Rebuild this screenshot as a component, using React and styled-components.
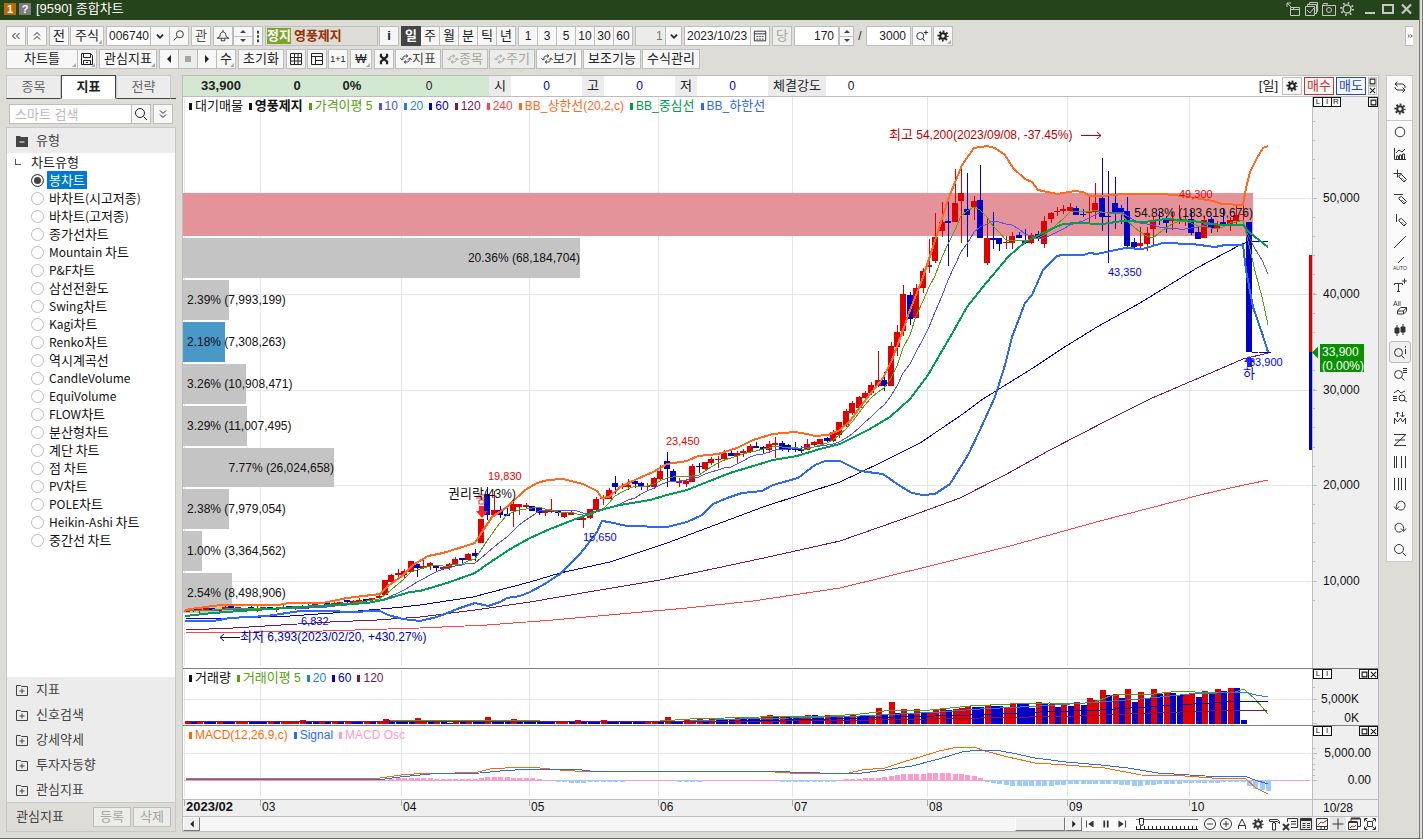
import React from "react"
import styled, { createGlobalStyle, css } from "styled-components"

const GlobalStyle = createGlobalStyle`
  * {
    box-sizing: border-box;
  }

  body {
    margin: 0;
    background: #dddcd6;
    color: #222;
    font-family: "Liberation Sans", "Noto Sans CJK KR", sans-serif;
    font-size: 12px;
    line-height: 16px;
  }

  button, input, select {
    font: inherit;
    color: inherit;
  }
`

/* ---------- icons ---------- */

const Gear = () => (
  <>
    <circle cx="8" cy="8" r="3.2" strokeWidth="2.4" />
    <circle cx="8" cy="8" r="5.2" strokeWidth="2.4" strokeDasharray="2.04 2.04" strokeDashoffset="1" />
  </>
)

const Lens = () => (
  <>
    <circle cx="6.5" cy="8.5" r="4" />
    <path d="M9.5 11.5l3 3" />
  </>
)

const Pen = () => <path d="M7 7.5l2.5-1 5 5-2.5 2.5-5-5zM9.5 10l1 1M11.500 11.500l1 1" />

const icons = {
  gear: <Gear />,
  search: <><circle cx="7" cy="7" r="4.5" /><path d="M10.5 10.5l3.5 3.5" /></>,
  searchLeft: <><circle cx="9" cy="6" r="4" /><path d="M6 9l-4 4" /></>,
  searchPlus: <><circle cx="6" cy="8" r="4" /><path d="M9 11l2 3M10 4h5M12.5 1.5v5" /></>,
  down: <path d="M4.5 6.5L8 10l3.5-3.5" strokeWidth="2" />,
  left2: <path d="M7.5 5l-3 3 3 3M11.5 5l-3 3 3 3" />,
  right2: <path d="M2 4l5 4-5 4M9 4l5 4-5 4" strokeWidth="2" />,
  up2: <path d="M5 7.5l3-3 3 3M5 11.5l3-3 3 3" />,
  down2: <path d="M5 4.5l3 3 3-3M5 8.5l3 3 3-3" />,
  dots: <path d="M7 2h2v3H7zM7 7h2v3H7zM7 12h2v3H7z" fill="currentColor" stroke="none" />,
  bell: <path d="M8 1v2M4.5 8.500c0-7 7-7 7 0l3 2h-13zM6 11v2.500h4V11" />,
  calendar: <><path d="M1.5 2.5h13v11h-13zM1.5 5.5h13" /><path d="M4 8.5h8M4 11.5h8" strokeDasharray="2 1" /></>,
  disk: <path d="M2.5 2.5h9l2 2v9h-11zM4.5 2.5v4h7v-4M4.5 13.5v-4h7v4M7 11.5h2" />,
  left: <path d="M10 4v8L6 8z" fill="currentColor" stroke="none" />,
  right: <path d="M6 4v8l4-4z" fill="currentColor" stroke="none" />,
  stop: <path d="M5 5h6v6H5z" fill="currentColor" stroke="none" />,
  table: <path d="M2.5 2.5h11v11h-11zM2.5 6.5h11M2.5 10h11M6.5 2.5v11M10 2.5v11" />,
  panes: <path d="M2.5 2.5h11v11h-11zM2.5 5.5h11M6.5 5.5v8M6.5 9.5h7" />,
  tools: <path d="M4.5 2v3L8 8l3.5-3V2M8 7v3M8 8l-3.5 3v3M8 8l3.5 3v3" strokeWidth="2.5" />,
  sync: <path d="M3 9V7.5L5.5 4h4.500M13 7v2l-2.500 3H6M.5 7L3 9.500 5.500 7M10.500 9L13 6.500 15.500 9M8 2l2.500 2L8 6M8 10l-2.500 2L8 14" strokeWidth="1.3" />,
  popout: <path d="M5.5 6.5h9v8h-9zM5.5 8.5h9M8.5 6.500v2M2 6V2h4M2 2l4 4" />,
  copyCheck: <path d="M2.5 5.5h9v9h-9zM4.5 5V3.5h9v9H12M6.5 3V1.5h8v9H14M4 9l3 3 4-5" />,
  camera: <><path d="M1.5 4.5h4l1-2h-4l-1 2v10h13v-10h-9" /><circle cx="8" cy="9" r="2.5" /></>,
  sun: <><circle cx="8" cy="8" r="4" strokeWidth="1.5" /><circle cx="8" cy="8" r="6" strokeDasharray="1.6 3.11" strokeWidth="2" /></>,
  minimize: <path d="M3 12h10" strokeWidth="2" />,
  maximize: <path d="M3 4h10v8H3z" strokeWidth="2" />,
  close: <path d="M4 3.5l9 9M13 3.5l-9 9" strokeWidth="2.2" />,
  box: <path d="M2.5 2.5h11v11h-11z" strokeWidth="2.5" />,
  cross: <path d="M2 2l12 12M14 2L2 14" strokeWidth="2.5" />,
  folderMinus: <><path d="M2 3h4l1 1h7v10H2z" fill="currentColor" stroke="none" /><path d="M5.5 9h5" stroke="#fff" /></>,
  folderPlus: <path d="M2.5 3.5h4l1 1h6v9h-11zM5.5 9h5M8 6.5v5" />,
  rotate: <path d="M5.5 2.5L3 5l2.5 2.5M3 5h8l2 2v2M10.5 8.5L13 11l-2.5 2.5M13 11H5L3 9V8" />,
  circle: <circle cx="8" cy="8" r="4.8" />,
  indicator: <path d="M2.5 2v11.5H14M4.5 13v-3h2v3M7.5 13V9h2v4M10.5 13V8h2v5M4 7l3-3 3 2 3-3" />,
  crossPen: <><path d="M1.5 5.5h8M5.5 1.5v8" /><Pen /></>,
  minusPen: <><path d="M2 4.5h9" /><Pen /></>,
  barPen: <><path d="M4.5 2v8" /><Pen /></>,
  line: <path d="M2 14L14 2" />,
  auto: <><path d="M6 7l6-6" /><text x="1" y="14" fontSize="5" fill="currentColor" stroke="none">AUTO</text></>,
  textPlus: <path d="M2.5 7V5.5h8V7M6.5 5.5v8M5 13.5h3M10 3h5M12.5 .5v5" />,
  eraser: <><text x="1" y="6" fontSize="7" fill="currentColor" stroke="none">All</text><path d="M5.5 11l3-3.5h6l-3 3.5zM5.5 11v3h6v-3M11.5 14l3-3V7.5" /></>,
  candles: <><path d="M5 3v11M11 2v11" /><path d="M3 6h4v5H3zM9 5h4v5H9z" fill="currentColor" /></>,
  lensInfo: <><Lens /><path d="M13.5 5v5M13.5 2v1.5" /></>,
  lensList: <><Lens /><path d="M11 2.5h4M11 4.5h4M11 6.5h4" /></>,
  lensChart: <><circle cx="10" cy="10" r="3" /><path d="M12 12l3 2M1 8.5h4M1 10.5h4M1 12.5h4M2 5l4-3 3 3 4-2" /></>,
  waveArrows: <path d="M2.5 14V8l3 4 3-4 2 4 3-4v6M5.5 7V2M3.5 4l2-2 2 2M10.5 2v5M8.5 5l2 2 2-2" />,
  zigzag: <path d="M2 2.5h12L2 13.5h12M3 8h10" />,
  bars5: <path d="M2.5 2v12M4.5 2v12M9.5 2v12M13.5 2v12" />,
  bars4: <path d="M2.5 2v12M6.5 2v12M9.5 2v12M13.5 2v12" />,
  undo: <path d="M4.5 10.5C3 2 13 1 13 7.5c0 5-5 5-6.5 4M2 8.500l2.5 3L7 8.500" />,
  redo: <path d="M11.5 10.5C13 2 3 1 3 7.5c0 5 5 5 6.5 4M14 8.500l-2.5 3L9 8.500" />,
  first: <><path d="M4 4v8" /><path d="M12 4v8L6 8z" fill="currentColor" stroke="none" /></>,
  pause: <path d="M6 4v8M10 4v8" strokeWidth="2" />,
  last: <><path d="M12 4v8" /><path d="M4 4v8l6-4z" fill="currentColor" stroke="none" /></>,
  zoomOut: <><circle cx="8" cy="8" r="5.5" /><path d="M5 8h6" /></>,
  zoomIn: <><circle cx="8" cy="8" r="5.5" /><path d="M5 8h6M8 5v6" /></>,
  letter: <path d="M4.5 13v-3L8 3l3.5 7v3M5 9.5h6" />,
  hammer: <path d="M3.5 3.5h8l2 2v2l-2-2h-3V7h1v7h-3V7h1V5.5h-4z" />,
  excel: <><path d="M5.5 6V2.5h10v9H9M9 5.5h5M9 8h5" /><path d="M1 8l6 6M7 8l-6 6" strokeWidth="2" /></>,
  list: <><path d="M2.5 2.5h11v11h-11z" /><path d="M2.5 4h11" strokeWidth="2" /><path d="M4.5 7.5h3M4.5 9.5h3M4.5 11.5h3M9 7.5h3M9 9.5h3M9 11.5h3" /></>,
  chartBox: <><path d="M2.5 2.5h11v11h-11zM2.5 10.5h11M7 10.5v3M10.5 10.5v3" /><path d="M4 9l3-3 2 1 4-3" stroke="#c22" /></>,
  plus: <path d="M8 2.5v11M2.5 8h11" />,
  windows: <><path d="M5 5V2.5h9.5v8H12M2.5 6.5h9v7h-9z" /><path d="M2.5 6h9M5 2.5h9" strokeWidth="2" /><path d="M4 12l2-2 2 1 2-2" stroke="#c22" /></>,
  fit: <path d="M2.5 5.5v-3h3M10.5 2.5h3v3M13.5 10.5v3h-3M5.5 13.5h-3v-3M5.5 5.5h5v5h-5zM3 3l2 2M13 3l-2 2M3 13l2-2M13 13l-2-2" />,
}

const IconSvg = styled.svg`
  display: block;
  flex: none;
  fill: none;
  stroke: currentColor;
`

const Icon = ({ name, size = 16 }) => (
  <IconSvg width={size} height={size} viewBox="0 0 16 16" aria-hidden="true">
    {icons[name]}
  </IconSvg>
)

/* ---------- chart data ---------- */

// vertical positions on the plot: body top, body bottom, high, low, 1 = rising
const early = [
  611, 610, 610, 609, 609, 610, 608, 607, 608, 609, 608, 609, 608, 608, 609, 608, 607, 607,
  607, 607, 605, 606, 604, 604, 603, 601, 602, 601, 600, 599, 597,
].map((y, i) => [y - 1, y + 1, y - (i % 4), y + (i % 3) + 1, i % 3 !== 1 ? 1 : 0])

const candles = [
  ...early,
  [580, 595, 580, 595, 1], [575, 582, 574, 583, 1], [573, 575, 569, 579, 1], [571, 575, 569, 578, 1],
  [561, 572, 561, 572, 1], [564, 568, 563, 577, 0], [566, 568, 560, 569, 1], [563, 566, 562, 570, 1],
  [566, 568, 565, 571, 0], [567, 569, 566, 570, 1], [564, 568, 563, 570, 1], [559, 564, 557, 565, 1],
  [558, 560, 558, 564, 0], [554, 560, 553, 560, 1], [553, 556, 549, 561, 0], [519, 543, 519, 543, 1],
  [494, 515, 487, 520, 0], [510, 515, 491, 516, 1], [510, 515, 506, 518, 0], [514, 516, 505, 516, 0],
  [504, 511, 502, 527, 1], [504, 507, 504, 515, 1], [505, 507, 503, 509, 1], [506, 511, 506, 511, 0],
  [508, 513, 507, 515, 0], [511, 513, 511, 516, 1], [510, 512, 499, 513, 1], [510, 513, 510, 516, 0],
  [513, 517, 512, 518, 1], [513, 515, 510, 515, 1], [519, 520, 517, 520, 0], [518, 520, 515, 528, 1],
  [509, 518, 509, 519, 1], [499, 510, 497, 510, 1], [497, 499, 495, 505, 1], [490, 499, 488, 499, 1],
  [483, 487, 476, 494, 0], [486, 487, 483, 489, 1], [485, 487, 479, 490, 1], [481, 484, 480, 488, 0],
  [483, 487, 482, 490, 0], [486, 487, 483, 490, 1], [478, 487, 477, 489, 1], [471, 479, 465, 480, 1],
  [461, 469, 452, 487, 0], [471, 481, 469, 481, 0], [481, 483, 478, 487, 1], [481, 484, 480, 487, 1],
  [466, 482, 464, 482, 1], [466, 467, 463, 473, 0], [462, 469, 462, 470, 1], [459, 463, 457, 465, 1],
  [459, 460, 456, 468, 1], [453, 459, 450, 461, 1], [453, 456, 451, 456, 0], [453, 456, 451, 464, 1],
  [451, 453, 449, 457, 1], [446, 452, 444, 453, 1], [446, 448, 442, 448, 0], [447, 449, 446, 453, 0],
  [444, 450, 441, 453, 1], [443, 445, 437, 458, 1], [443, 449, 441, 451, 0], [445, 450, 444, 452, 0],
  [447, 450, 442, 452, 0], [449, 451, 446, 453, 0], [444, 450, 439, 450, 1], [442, 445, 441, 446, 1],
  [439, 444, 439, 444, 1], [438, 441, 437, 442, 0], [432, 441, 430, 442, 1], [422, 435, 422, 438, 1],
  [411, 425, 409, 427, 1], [403, 413, 401, 415, 1], [397, 408, 396, 408, 1], [393, 398, 391, 400, 1],
  [385, 393, 382, 395, 1], [380, 386, 351, 387, 1], [380, 386, 372, 391, 0], [346, 386, 342, 386, 1],
  [332, 347, 325, 356, 1], [294, 331, 285, 336, 1], [295, 319, 292, 325, 0], [288, 318, 284, 318, 1],
  [271, 288, 268, 293, 1], [265, 267, 239, 273, 1], [237, 261, 213, 263, 1], [222, 231, 202, 237, 1],
  [221, 223, 201, 266, 0], [203, 222, 169, 222, 1], [193, 201, 169, 243, 1], [209, 215, 173, 257, 0],
  [201, 207, 196, 220, 1], [200, 238, 165, 238, 0], [238, 263, 219, 265, 1], [238, 240, 212, 249, 0],
  [238, 244, 238, 251, 0], [242, 243, 236, 249, 1], [236, 243, 232, 249, 1], [235, 238, 232, 238, 0],
  [241, 243, 229, 244, 0], [235, 243, 233, 244, 1], [234, 239, 231, 241, 0], [221, 244, 216, 248, 1],
  [213, 219, 212, 223, 1], [211, 212, 207, 216, 1], [209, 211, 205, 214, 1], [207, 211, 203, 211, 1],
  [208, 215, 206, 215, 0], [214, 215, 209, 217, 0], [212, 213, 197, 224, 1], [203, 212, 183, 219, 1],
  [198, 217, 158, 231, 0], [216, 217, 171, 263, 0], [203, 214, 177, 229, 0], [208, 212, 205, 224, 0],
  [211, 246, 197, 247, 0], [242, 247, 238, 248, 0], [243, 246, 227, 249, 1], [233, 244, 227, 251, 1],
  [221, 229, 216, 247, 1], [219, 221, 211, 225, 0], [220, 223, 216, 233, 0], [220, 221, 212, 230, 1],
  [219, 221, 205, 224, 1], [220, 222, 215, 226, 1], [219, 233, 210, 235, 0], [232, 239, 226, 239, 0],
  [220, 238, 216, 238, 1], [219, 228, 217, 233, 0], [224, 229, 221, 232, 1], [222, 225, 208, 226, 0],
  [220, 224, 217, 231, 1], [215, 221, 206, 224, 1], [214, 215, 206, 220, 1], [222, 352, 222, 352, 0],
  [352, 353, 352, 353, 0], [352, 353, 352, 353, 0], [352, 353, 352, 353, 0],
]

const xAt = i => Math.round(186.5 + i * 6.4)

const closes = candles.map(c => (c[4] ? c[0] : c[1]))

const average = (values, span) =>
  values.map((_, i) => {
    const part = values.slice(Math.max(0, i - span + 1), i + 1)
    return part.reduce((sum, v) => sum + v, 0) / part.length
  })

const toPoints = values => values.map((v, i) => `${xAt(i)},${Math.round(v)}`).join(" ")

// linear value at x between [x, value] anchors
const between = (anchors, x) => {
  const next = anchors.findIndex(a => a[0] >= x)
  if (next === -1) return anchors[anchors.length - 1][1]
  if (next === 0) return anchors[0][1]
  const [x0, v0] = anchors[next - 1]
  const [x1, v1] = anchors[next]
  return v0 + ((v1 - v0) * (x - x0)) / (x1 - x0)
}

const priceLines = [
  { color: "#ff4444", width: 1, points: "186,633 323,631 420,628 487,625 553,620 620,614 687,608 753,601 840,588 930,566 1010,546 1100,521 1150,508 1200,495 1230,488 1268,480" },
  { color: "#7a1a4c", width: 1, points: "186,630 233,628 330,622 377,620 420,617 475,610 530,602 600,590 660,580 717,568 773,556 840,541 900,520 960,498 1005,475 1050,450 1110,419 1150,399 1187,383 1213,372 1243,359 1268,353" },
  { color: "#0000c0", width: 1, points: "186,618 233,618 290,616 347,612 403,607 420,605 473,597 530,582 560,573 610,562 667,543 763,507 840,482 880,463 920,443 960,416 983,399 1033,368 1063,348 1097,327 1140,303 1197,268 1242,244 1248,242 1268,241" },
  { color: "#5050ff", width: 1, points: toPoints(average(closes, 10)) },
  { color: "#55a010", width: 1, points: toPoints(average(closes, 5)) },
  { color: "#ff6a1e", width: 2, points: "184,611 190,609 221,605 279,605 288,603 323,603 347,598 380,594 388,586 402,576 413,565 420,561 428,556 443,553 475,543 482,532 492,517 507,507 525,490 537,483 548,480 563,479 583,484 597,491 602,498 609,497 620,487 637,479 653,472 667,464 687,461 698,456 718,454 737,448 753,440 773,434 795,432 807,434 815,436 828,435 840,430 850,421 867,398 883,378 892,360 902,333 910,310 922,280 932,250 948,200 962,165 974,148 987,146 995,148 1005,155 1013,168 1025,179 1032,182 1038,190 1057,194 1075,191 1083,192 1090,196 1103,196 1123,194 1163,194 1183,196 1195,198 1213,201 1222,204 1243,205 1246,188 1250,172 1257,158 1263,148 1268,146" },
  { color: "#2e6af0", width: 2, points: "185,621 213,621 230,618 267,616 300,611 333,611 347,612 380,611 388,615 403,619 420,621 437,617 460,608 475,603 488,606 500,602 507,598 520,596 530,592 543,585 560,574 580,554 597,532 602,521 609,522 627,526 667,527 687,522 702,515 713,504 727,498 742,493 762,491 773,485 798,478 815,465 825,461 840,461 852,467 860,471 883,474 900,486 912,493 923,495 935,494 950,484 968,455 980,430 995,397 1005,365 1012,337 1025,303 1032,295 1043,270 1057,256 1062,255 1083,255 1090,253 1097,254 1125,248 1142,249 1163,243 1192,244 1215,247 1225,245 1243,245 1246,270 1253,307 1262,333 1268,352" },
  { color: "#00a050", width: 2, points: "185,616 213,613 240,611 300,607 367,603 383,600 410,592 420,591 447,583 475,573 492,561 512,548 530,538 550,529 573,520 600,510 620,505 650,500 667,495 687,490 707,482 730,473 773,460 797,456 820,449 840,444 868,430 890,417 910,399 928,375 953,332 967,307 987,282 1008,257 1025,242 1047,231 1063,224 1077,223 1103,224 1122,221 1145,222 1165,219 1183,220 1200,222 1220,225 1243,225 1250,233 1268,247" },
]

const months = [
  [184, "2023/02"], [260, "03"], [401, "04"], [529, "05"], [658, "06"],
  [792, "07"], [927, "08"], [1067, "09"], [1189, "10"],
]

const prices = [[198, "50,000"], [294, "40,000"], [390, "30,000"], [485, "20,000"], [581, "10,000"]]

const profile = [
  { y: 193, h: 43, end: 1253, color: "#e4939a", label: "54.83% (183,619,676)", inside: true },
  { y: 238, h: 40, end: 580, label: "20.36% (68,184,704)", inside: true },
  { y: 280, h: 40, end: 229, label: "2.39% (7,993,199)" },
  { y: 322, h: 40, end: 225, color: "#4898c8", label: "2.18% (7,308,263)" },
  { y: 364, h: 40, end: 246, label: "3.26% (10,908,471)" },
  { y: 406, h: 40, end: 247, label: "3.29% (11,007,495)" },
  { y: 448, h: 39, end: 334, label: "7.77% (26,024,658)", inside: true },
  { y: 489, h: 40, end: 229, label: "2.38% (7,979,054)" },
  { y: 531, h: 40, end: 202, label: "1.00% (3,364,562)" },
  { y: 573, h: 40, end: 232, label: "2.54% (8,498,906)" },
]

const notes = [
  { x: 889, y: 139, color: "#c00000", text: "최고 54,200(2023/09/08, -37.45%)" },
  { x: 240, y: 641, color: "#0000b0", text: "최저 6,393(2023/02/20, +430.27%)" },
  { x: 301, y: 625, color: "#0000ff", text: "6,832", size: 11 },
  { x: 488, y: 480, color: "#f00000", text: "19,830", size: 11 },
  { x: 448, y: 498, color: "#111", text: "권리락(43%)" },
  { x: 583, y: 541, color: "#0000ff", text: "15,650", size: 11 },
  { x: 666, y: 445, color: "#f00000", text: "23,450", size: 11 },
  { x: 1179, y: 198, color: "#f00000", text: "49,300", size: 11 },
  { x: 1108, y: 276, color: "#0000ff", text: "43,350", size: 11 },
  { x: 1249, y: 366, color: "#0000ff", text: "33,900", size: 11 },
  { x: 1243, y: 378, color: "#0000ff", text: "하" },
]

const volumes = [
  3, 3, 3, 3, 2, 3, 3, 2, 3, 2, 2, 2, 2, 3, 2, 3, 2, 3, 4, 2, 2, 3, 2, 2, 2, 3, 3, 2, 3, 3, 2, 5, 4, 3, 3,
  3, 6, 3, 3, 4, 3, 1, 2, 2, 3, 3, 3, 7, 3, 3, 3, 5, 3, 3, 3, 3, 2, 2, 2, 3, 2, 4, 3, 3, 3, 4, 3, 3, 3, 3,
  3, 3, 2, 3, 3, 7, 3, 3, 4, 4, 5, 4, 5, 5, 5, 5, 6, 6, 6, 5, 8, 9, 7, 7, 7, 6, 7, 9, 9, 8, 9, 8, 9, 7, 9,
  8, 8, 9, 16, 9, 22, 11, 15, 10, 15, 11, 12, 14, 15, 14, 15, 16, 18, 17, 17, 19, 18, 18, 16, 20, 20, 20, 16,
  22, 21, 20, 17, 19, 18, 22, 19, 26, 24, 34, 29, 30, 26, 35, 22, 32, 26, 35, 30, 32, 31, 29, 30, 31, 27,
  33, 30, 35, 33, 36, 36, 4,
]

const volumeLines = [
  { color: "#55a010", points: "186,721 390,721 420,720 520,720 560,722 660,721 690,719 760,717 830,716 860,714 878,712 890,710 930,710 970,706 1010,704 1050,703 1075,704 1095,702 1110,696 1125,694 1145,695 1180,691 1210,693 1235,692 1244,689 1256,700 1268,714" },
  { color: "#1c84dc", points: "186,722 690,721 740,719 790,718 860,716 900,714 940,712 980,709 1040,706 1100,702 1140,699 1190,694 1244,692 1256,695 1268,697" },
  { color: "#0000c0", points: "186,722 740,721 830,719 900,717 970,715 1040,712 1100,710 1160,706 1210,703 1244,701 1268,701" },
  { color: "#7a1a4c", points: "186,722 780,721 870,720 980,718 1080,716 1150,713 1210,711 1268,710" },
]

const macdLines = [
  { color: "#ff6a00", points: "186,778 380,778 401,775 427,773 455,773 478,772 490,769 520,767 540,768 560,770 590,772 680,771 720,771 760,771 790,773 820,774 849,773 862,770 885,768 903,762 920,757 939,751 958,747 974,747 985,751 1008,757 1035,763 1066,765 1105,768 1141,775 1185,776 1212,778 1245,778 1256,788 1268,794" },
  { color: "#2e6af0", points: "186,779 385,779 400,777 430,774 480,773 500,771 530,769 573,769 590,771 760,771 820,773 862,773 885,770 912,766 939,759 962,752 978,750 995,750 1012,753 1035,758 1066,762 1101,765 1128,768 1158,773 1205,776 1247,777 1255,780 1268,784" },
]

const oscAnchors = [
  [186, 0], [385, 0], [401, 2], [420, 2], [445, 1], [475, 1], [490, 3], [530, 2], [545, 0], [575, -2],
  [605, -1], [640, 0], [665, 0], [690, -1], [710, 0], [760, 0], [790, -1], [830, -1], [845, 1], [880, 2], [903, 6], [945, 7],
  [958, 6], [974, 4], [982, 1], [986, -1], [1010, -5], [1045, -5], [1070, -3], [1110, -3], [1135, -5],
  [1165, -3], [1200, -2], [1240, -1], [1247, -1], [1249, -5], [1255, -8], [1261, -9], [1268, -10],
]

/* ---------- chart drawing ---------- */

const hangul = /([\uac00-\ud7a3]+)/

const Mixed = ({ text }) =>
  text.split(hangul).map((part, i) => (i % 2 ? <Ko key={i}>{part}</Ko> : part))

const Columns = ({ top, bottom }) =>
  months.map(([x]) => <line key={x} x1={x + 0.5} x2={x + 0.5} y1={top} y2={bottom} stroke="#e6e6e6" />)

const Row = ({ y }) => <line x1="183" x2="1311" y1={y + 0.5} y2={y + 0.5} stroke="#e6e6e6" />

const Scale = ({ top, bottom, ticks, minor = [] }) => (
  <>
    <rect x="1312" y={top} width="66" height={bottom - top} fill="#efefef" />
    <line x1="1312.5" x2="1312.5" y1={top} y2={bottom} stroke="#bdbdbd" />
    {minor.map(y => <line key={y} x1="1313" x2="1315" y1={y + 0.5} y2={y + 0.5} stroke="#bdbdbd" />)}
    {ticks.map(([y]) => <line key={y} x1="1313" x2="1317" y1={y + 0.5} y2={y + 0.5} stroke="#bdbdbd" />)}
  </>
)

const minorPrices = Array.from({ length: 26 }, (_, i) => Math.round(121 + i * 19.15)).filter(y => y < 660)

const PricePlot = () => (
  <Plot viewBox="183 97 1195 571" role="img" aria-label="영풍제지 일봉">
    <Columns top={97} bottom={666} />
    {prices.map(([y]) => <Row key={y} y={y} />)}
    {profile.map(b => (
      <rect key={b.y} x="183" y={b.y} width={b.end - 183} height={b.h} fill={b.color || "#c4c4c4"} />
    ))}
    {candles.map(([top, bottom, high, low, up], i) => (
      <g key={i} fill={up ? "#e00000" : "#0000c8"}>
        <rect x={xAt(i)} y={high} width="1" height={low - high} />
        <rect x={xAt(i) - 3} y={top} width="6" height={bottom - top} />
      </g>
    ))}
    {priceLines.map(l => (
      <polyline key={l.color} points={l.points} fill="none" stroke={l.color} strokeWidth={l.width} />
    ))}
    <path d="M479 506h5v5h4l-6 7-6-7h3z" fill="#ff2020" />
    <path d="M478 495h7M476 498h11M479 500h5v4h-5z" fill="none" stroke="#ff2020" />
    <path d="M1249 356l6 6h-3v5h-5v-5h-3z" fill="#2020ff" />
    <path d="M1081 135.500h20M1097 132l4 3.500-4 3.500" fill="none" stroke="#c00000" />
    <path d="M240 637.500h-20M224 634l-4 3.500 4 3.500" fill="none" stroke="#0000b0" />
    {profile.map(b => (
      <text key={b.y} x={b.inside ? b.end : 187} y={b.y + 24} textAnchor={b.inside ? "end" : "start"} fill="#111">
        {b.label}
      </text>
    ))}
    {notes.map(n => (
      <text key={n.text} x={n.x} y={n.y} fill={n.color} fontSize={n.size || 12}>
        {n.text.split(hangul).map((part, i) => (i % 2 ? <tspan key={i} fontSize="13">{part}</tspan> : part))}
      </text>
    ))}
    <Scale top={97} bottom={668} ticks={prices} minor={minorPrices} />
    <rect x="1309" y="255" width="3" height="97" fill="#e00000" />
    <rect x="1309" y="352" width="3" height="98" fill="#0000b4" />
    {prices.map(([y, label]) => <text key={y} x="1323" y={y + 4} fill="#111">{label}</text>)}
    <path d="M1312 352.500l6-6v12z" fill="#089000" />
    <rect x="1320" y="344" width="44" height="28" fill="#089000" />
    <text x="1322" y="356" fill="#fff">33,900</text>
    <text x="1322" y="370" fill="#fff">(0.00%)</text>
  </Plot>
)

const VolumePlot = () => (
  <Plot viewBox="183 669 1195 56" role="img" aria-label="거래량">
    <Columns top={670} bottom={724} />
    <Row y={699} />
    {volumes.map((h, i) => (
      <rect key={i} x={xAt(i) - 2} y={724 - h} width="6" height={h} fill={h > (volumes[i - 1] || 0) || i % 7 === 2 ? "#e00000" : "#0000c8"} />
    ))}
    {volumeLines.map(l => <polyline key={l.color} points={l.points} fill="none" stroke={l.color} />)}
    <Scale top={669} bottom={725} ticks={[[699], [723]]} minor={[687, 711]} />
    <text x="1359" y="703" textAnchor="end" fill="#111">5,000K</text>
    <text x="1359" y="722" textAnchor="end" fill="#111">0K</text>
  </Plot>
)

const MacdPlot = () => (
  <Plot viewBox="183 726 1195 73" role="img" aria-label="MACD">
    <Columns top={727} bottom={797} />
    <Row y={753} />
    <line x1="184" x2="1310" y1="780.5" y2="780.5" stroke="#ff9ad0" />
    {candles.map((_, i) => {
      const v = Math.round(between(oscAnchors, xAt(i)))
      if (!v) return null
      return (
        <rect key={i} x={xAt(i) - 2} y={v > 0 ? 780 - v : 780} width="5" height={Math.abs(v) + 1} fill={v > 0 ? "#ff9acc" : "#99ccff"} />
      )
    })}
    {macdLines.map(l => <polyline key={l.color} points={l.points} fill="none" stroke={l.color} />)}
    <Scale top={726} bottom={799} ticks={[[753], [780]]} minor={[748, 758, 764, 769, 775]} />
    <text x="1371" y="757" textAnchor="end" fill="#111">5,000.00</text>
    <text x="1371" y="784" textAnchor="end" fill="#111">0.00</text>
  </Plot>
)

const DatePlot = () => (
  <Plot viewBox="183 800 1195 16" role="img" aria-label="날짜">
    <rect x="183" y="800" width="1195" height="16" fill="#efefef" />
    {months.map(([x, label], i) => (
      <g key={x}>
        <line x1={x + 0.5} x2={x + 0.5} y1="800" y2="806" stroke="#aaa" />
        <text x={x + 2} y="811" fill="#111" fontSize={i ? 12 : 13} fontWeight={i ? 400 : 700}>{label}</text>
      </g>
    ))}
    <line x1="1312.5" x2="1312.5" y1="800" y2="816" stroke="#bdbdbd" />
    <text x="1323" y="812" fill="#111">10/28</text>
  </Plot>
)

const priceLegend = [
  ["대기매물", "#111"], ["영풍제지", "#111", true], ["가격이평 5", "#55a010"], ["10", "#5050ff"],
  ["20", "#1c84dc"], ["60", "#0000c0"], ["120", "#7a1a4c"], ["240", "#ff4444"],
  ["BB_상한선(20,2,c)", "#ff6a1e"], ["BB_중심선", "#009a4c"], ["BB_하한선", "#2e6af0"],
]
const volumeLegend = [
  ["거래량", "#111"], ["거래이평 5", "#55a010"], ["20", "#1c84dc"], ["60", "#0000c0"], ["120", "#7a1a4c"],
]
const macdLegend = [["MACD(12,26,9,c)", "#ff6a00"], ["Signal", "#2e6af0"], ["MACD Osc", "#ff9acc"]]

const Pane = ({ legend, marks, ends, children }) => (
  <PaneBox>
    {children}
    <LegendRow>
      {legend.map(([text, color, bold]) => (
        <LegendItem key={text} $color={color} $bold={bold}><Mixed text={text} /></LegendItem>
      ))}
    </LegendRow>
    <PaneTools>
      <PaneMarks>{marks.map(m => <MiniButton key={m}>{m}</MiniButton>)}</PaneMarks>
      <PaneMarks>{ends.map(m => <MiniButton key={m} aria-label={m}><Icon name={m} size={7} /></MiniButton>)}</PaneMarks>
    </PaneTools>
  </PaneBox>
)

/* ---------- page parts ---------- */

const Spin = () => (
  <Spinner>
    <SpinButton aria-label="증가"><SpinArrow viewBox="0 0 6 3"><path d="M0 3l3-3 3 3z" /></SpinArrow></SpinButton>
    <SpinButton aria-label="감소"><SpinArrow viewBox="0 0 6 3"><path d="M0 0l3 3 3-3z" /></SpinArrow></SpinButton>
  </Spinner>
)

const TitleBar = () => (
  <Title>
    <Badge $color="#c06800">1</Badge>
    <Badge $color="#7c7c7c">?</Badge>
    <TitleText>[9590] 종합차트</TitleText>
    <WindowButtons>
      {["popout", "copyCheck", "camera", "sun"].map(n => <WindowButton key={n} aria-label={n}><Icon name={n} /></WindowButton>)}
    </WindowButtons>
    <WindowButtons>
      {["minimize", "maximize", "close"].map(n => <WindowButton key={n} aria-label={n}><Icon name={n} /></WindowButton>)}
    </WindowButtons>
  </Title>
)

const Toolbars = () => (
  <ToolbarArea>
    <Toolbar>
      <Group $gap={1}>
        <Button aria-label="이전"><Icon name="left2" /></Button>
        <Button aria-label="접기"><Icon name="up2" /></Button>
      </Group>
      <Group $gap={1}>
        <Button>전</Button>
        <Button $w={34} $corner>주식</Button>
      </Group>
      <Group $joined>
        <Field $w={45} aria-label="종목코드" defaultValue="006740" />
        <Button aria-label="종목 목록"><Icon name="down" size={14} /></Button>
        <Button aria-label="종목 찾기"><Icon name="searchLeft" size={14} /></Button>
      </Group>
      <Button $tone="#555">관</Button>
      <Group>
        <Button aria-label="알림"><Icon name="bell" size={14} /></Button>
        <Spin />
        <Button $w={10} aria-label="더보기"><Icon name="dots" size={14} /></Button>
      </Group>
      <Group $gap={1}>
        <StockName>
          <StopTag>정지</StopTag>
          영풍제지
        </StockName>
        <Button $bold>i</Button>
      </Group>
      <Group $joined>
        {["일", "주", "월", "분", "틱", "년"].map((p, i) => <Button key={p} $active={i === 0}>{p}</Button>)}
      </Group>
      <Group $joined>
        {["1", "3", "5", "10", "30", "60"].map(p => <Button key={p} $num>{p}</Button>)}
      </Group>
      <Group $joined>
        <Drop aria-label="주기" defaultValue="1"><option>1</option></Drop>
        <Button $w={17} aria-label="주기 목록"><Icon name="down" size={14} /></Button>
      </Group>
      <Group $joined>
        <Field $w={67} aria-label="날짜" defaultValue="2023/10/23" />
        <Button aria-label="달력"><Icon name="calendar" size={14} /></Button>
      </Group>
      <Button disabled>당</Button>
      <Group>
        <Field $w={45} $right aria-label="봉 개수" defaultValue="170" />
        <Spin />
      </Group>
      <Slash>/</Slash>
      <Group $gap={1}>
        <Field $w={45} $right aria-label="전체 개수" defaultValue="3000" />
        <Button aria-label="확대"><Icon name="searchPlus" size={14} /></Button>
        <Button $corner aria-label="설정"><Icon name="gear" size={14} /></Button>
      </Group>
      <Overflow aria-label="더보기"><Icon name="right2" size={6} /></Overflow>
    </Toolbar>
    <Toolbar>
      <Group $joined>
        <Button $w={72} $corner>차트틀</Button>
        <Button $corner aria-label="저장"><Icon name="disk" /></Button>
      </Group>
      <Button $w={58} $corner>관심지표</Button>
      <Group $joined>
        <Button aria-label="이전"><Icon name="left" /></Button>
        <Button disabled aria-label="정지"><Icon name="stop" /></Button>
        <Button aria-label="다음"><Icon name="right" /></Button>
        <Button $corner>수</Button>
      </Group>
      <Button $w={46}>초기화</Button>
      <Group $gap={1}>
        <Button aria-label="표"><Icon name="table" /></Button>
        <Button aria-label="분할"><Icon name="panes" /></Button>
        <Button $tiny>1+1</Button>
      </Group>
      <Button $w={22} $num $corner>₩</Button>
      <Group $gap={1}>
        <Button aria-label="도구"><Icon name="tools" size={14} /></Button>
        <Button $w={46} $tone="#444"><Icon name="sync" size={12} />지표</Button>
        <Button $w={46} disabled><Icon name="sync" size={12} />종목</Button>
        <Button $w={46} disabled><Icon name="sync" size={12} />주기</Button>
        <Button $w={46} $tone="#444"><Icon name="sync" size={12} />보기</Button>
        <Button $w={58}>보조기능</Button>
        <Button $w={58}>수식관리</Button>
      </Group>
    </Toolbar>
  </ToolbarArea>
)

const chartTypes = [
  "봉차트", "바차트(시고저종)", "바차트(고저종)", "종가선차트", "Mountain 차트", "P&F차트", "삼선전환도",
  "Swing차트", "Kagi차트", "Renko차트", "역시계곡선", "CandleVolume", "EquiVolume", "FLOW차트",
  "분산형차트", "계단 차트", "점 차트", "PV차트", "POLE차트", "Heikin-Ashi 차트", "중간선 차트",
]

const SidePanel = () => (
  <Sidebar>
    <Tabs>
      <Tab>종목</Tab>
      <Tab $active>지표</Tab>
      <Tab>전략</Tab>
    </Tabs>
    <SearchRow>
      <SearchGroup>
        <SearchField placeholder="스마트 검색" aria-label="스마트 검색" />
        <Button aria-label="검색"><Icon name="search" /></Button>
      </SearchGroup>
      <Button aria-label="펼치기"><Icon name="down2" /></Button>
    </SearchRow>
    <SideBox>
      <Category><Icon name="folderMinus" />유형</Category>
      <Tree>
        <TreeRoot>차트유형</TreeRoot>
        {chartTypes.map((name, i) => (
          <TreeItem key={name}>
            <Radio type="radio" name="chartType" defaultChecked={i === 0} />
            <TreeText $active={i === 0}><Mixed text={name} /></TreeText>
          </TreeItem>
        ))}
      </Tree>
      {["지표", "신호검색", "강세약세", "투자자동향", "관심지표"].map(name => (
        <Category key={name}><Icon name="folderPlus" />{name}</Category>
      ))}
      <SideFooter>
        <FooterText>관심지표</FooterText>
        <Button $w={38} disabled>등록</Button>
        <Button $w={38} disabled>삭제</Button>
      </SideFooter>
    </SideBox>
  </Sidebar>
)

const Quote = () => (
  <QuoteRow>
    <GreenCells>
      <QuoteCell $w={76} $bold>33,900</QuoteCell>
      <QuoteCell $w={76} $bold>0</QuoteCell>
      <QuoteCell $w={34} $bold>0%</QuoteCell>
      <QuoteCell $w={120}>0</QuoteCell>
    </GreenCells>
    {["시", "고", "저"].map(name => (
      <React.Fragment key={name}>
        <QuoteLabel $w={22}>{name}</QuoteLabel>
        <QuoteCell $w={71} $blue>0</QuoteCell>
      </React.Fragment>
    ))}
    <QuoteLabel $w={58}>체결강도</QuoteLabel>
    <QuoteCell $w={50}>0</QuoteCell>
    <QuoteTools>
      <PeriodText>[일]</PeriodText>
      <Button $h={18} aria-label="차트 설정"><Icon name="gear" size={14} /></Button>
      <OrderButton $color="#d03030">매수</OrderButton>
      <OrderButton $color="#1c48d0">매도</OrderButton>
      <StackedButtons>
        <StackButton aria-label="최대화"><Icon name="box" size={7} /></StackButton>
        <StackButton aria-label="닫기"><Icon name="cross" size={7} /></StackButton>
      </StackedButtons>
    </QuoteTools>
  </QuoteRow>
)

const BottomBar = () => (
  <ScrollRow>
    <ScrollButton aria-label="왼쪽"><Icon name="left" size={14} /></ScrollButton>
    <Track><Thumb /></Track>
    <ScrollButton aria-label="오른쪽"><Icon name="right" size={14} /></ScrollButton>
    <FlatButtons>
      {["first", "pause", "last"].map(n => <FlatButton key={n} aria-label={n}><Icon name={n} size={14} /></FlatButton>)}
    </FlatButtons>
    <SpeedBox>
      <Speed type="range" min="0" max="20" defaultValue="1" aria-label="속도" />
      <Ruler />
    </SpeedBox>
    <FlatButtons>
      {["zoomOut", "zoomIn", "letter", "gear", "hammer", "excel", "list", "chartBox", "plus", "windows", "fit"].map(n => (
        <FlatButton key={n} $on={n === "list" || n === "plus"} aria-label={n}><Icon name={n} size={n === "gear" ? 14 : 16} /></FlatButton>
      ))}
    </FlatButtons>
  </ScrollRow>
)

const drawTools = [
  "circle", "indicator", "crossPen", "minusPen", "barPen", "line", "auto", "textPlus", "eraser", "candles",
  "lensInfo", "lensList", "lensChart", "waveArrows", "zigzag", "bars5", "bars4", "undo", "redo", "search",
]

const App = () => {
  return (
    <>
      <GlobalStyle />
      <Frame>
        <TitleBar />
        <Toolbars />
        <Body>
          <SidePanel />
          <ChartPanel>
            <Quote />
            <Pane legend={priceLegend} marks={["L", "I", "R"]} ends={["box"]}><PricePlot /></Pane>
            <Pane legend={volumeLegend} marks={["L", "I"]} ends={["box", "cross"]}><VolumePlot /></Pane>
            <Pane legend={macdLegend} marks={["L", "I"]} ends={["box", "cross"]}><MacdPlot /></Pane>
            <DatePlot />
            <BottomBar />
          </ChartPanel>
          <ToolStrip>
            <StripGroup>
              <StripButton aria-label="rotate"><Icon name="rotate" /></StripButton>
              <StripButton aria-label="gear"><Icon name="gear" size={14} /></StripButton>
            </StripGroup>
            {drawTools.map(n => (
              <StripButton key={n} $on={n === "lensInfo"} aria-label={n}><Icon name={n} /></StripButton>
            ))}
          </ToolStrip>
        </Body>
      </Frame>
    </>
  )
}

export default App

const Frame = styled.div`
  display: flex;
  flex-direction: column;
  min-height: 100vh;
  padding-bottom: 6px;
  border-right: 4px double #777;
  border-bottom: 1px solid #666;
`

const Title = styled.header`
  display: flex;
  align-items: center;
  gap: 3px;
  height: 20px;
  padding: 0 5px 2px 4px;
  background: #25441c;
  color: #fff;
`
const Badge = styled.span`
  width: 12px;
  height: 12px;
  background: ${p => p.$color};
  font-weight: bold;
  font-size: 11px;
  line-height: 12px;
  text-align: center;
`
const TitleText = styled.h1`
  flex: 1;
  margin: 0 0 0 2px;
  font-size: 13px;
  font-weight: 400;
`
const WindowButtons = styled.div`
  display: flex;
  gap: 2px;
  margin-left: 4px;
`
const WindowButton = styled.button`
  padding: 0;
  border: 0;
  background: none;
  color: #c4c8c0;
`

const ToolbarArea = styled.div`
  display: flex;
  flex-direction: column;
  gap: 3px;
  padding: 6px;
`
const Toolbar = styled.div`
  display: flex;
  gap: 2px;
  height: 20px;
`
const Group = styled.div`
  display: flex;
  gap: ${p => p.$gap || 0}px;

  ${p => p.$joined && css`
    > * + * {
      margin-left: -1px;
    }
  `}
`
const Button = styled.button`
  position: relative;
  display: flex;
  flex: none;
  align-items: center;
  justify-content: center;
  width: ${p => p.$w || 20}px;
  height: ${p => p.$h || 20}px;
  padding: 0;
  border: 1px solid #bdbdbd;
  background: #f7f7f7;
  color: ${p => p.$tone || "#222"};
  font-size: ${p => (p.$tiny ? 9 : p.$num ? 12 : 13)}px;
  font-weight: ${p => (p.$bold ? 700 : 400)};
  white-space: nowrap;

  &:disabled {
    background: #ececea;
    color: #a4a4a0;
  }

  ${p => p.$active && css`
    z-index: 1;
    border-color: #444;
    background: #444;
    color: #fff;
    font-weight: 700;
  `}

  ${p => p.$corner && css`
    &::after {
      content: "";
      position: absolute;
      right: 1px;
      bottom: 1px;
      border-left: 4px solid transparent;
      border-bottom: 4px solid #aaa;
    }
  `}
`
const Field = styled.input`
  width: ${p => p.$w}px;
  height: 20px;
  padding: 0 ${p => (p.$right ? 4 : 0)}px 0 ${p => (p.$right ? 3 : 2)}px;
  border: 1px solid #bdbdbd;
  background: #fff;
  text-align: ${p => (p.$right ? "right" : "left")};
`
const Drop = styled.select`
  appearance: none;
  width: 31px;
  height: 20px;
  padding: 0 0 0 20px;
  border: 1px solid #bdbdbd;
  border-radius: 0;
  background: #ececea;
  color: #777;
`
const Spinner = styled.div`
  display: flex;
  flex-direction: column;
  width: 20px;
  height: 20px;

  input + & {
    width: 15px;
  }
`
const SpinButton = styled.button`
  display: flex;
  flex: 1;
  align-items: center;
  justify-content: center;
  padding: 0;
  border: 1px solid #bdbdbd;
  background: #f7f7f7;

  & + & {
    border-top: 0;
  }
`
const SpinArrow = styled.svg`
  width: 6px;
  height: 3px;
  fill: #444;
`
const StockName = styled.div`
  display: flex;
  align-items: center;
  gap: 3px;
  width: 113px;
  height: 20px;
  padding: 1px;
  border: 1px solid #bdbdbd;
  background: #dddcd6;
  color: #983000;
  font-size: 13px;
  font-weight: 700;
`
const StopTag = styled.span`
  background: #7da428;
  color: #fff;
`
const Slash = styled.span`
  width: 8px;
  text-align: center;
  line-height: 20px;
`
const Overflow = styled.button`
  display: flex;
  align-items: center;
  justify-content: center;
  width: 8px;
  margin-left: auto;
  padding: 0;
  border: 1px solid #bdbdbd;
  border-right: 0;
  background: #fff;
`

const Body = styled.div`
  display: flex;
  flex: 1;
  padding: 0 6px;
`

const Sidebar = styled.aside`
  display: flex;
  flex: none;
  flex-direction: column;
  width: 170px;
  margin-right: 6px;
`
const Tabs = styled.div`
  display: flex;
  height: 24px;
  padding-right: 5px;
  border-bottom: 1px solid #444;
`
const Tab = styled.button`
  flex: 1;
  height: 24px;
  padding: 0;
  border: 1px solid ${p => (p.$active ? "#444" : "#c8c8c8")};
  border-bottom-color: ${p => (p.$active ? "#fff" : "#444")};
  background: ${p => (p.$active ? "#fff" : "#ececec")};
  color: ${p => (p.$active ? "#222" : "#666")};
  font-size: 13px;
  font-weight: ${p => (p.$active ? 700 : 400)};
`
const SearchRow = styled.div`
  display: flex;
  gap: 2px;
  padding: 5px 3px 3px;
`
const SearchGroup = styled.div`
  display: flex;
  flex: 1;
  min-width: 0;
`
const SearchField = styled.input`
  flex: 1;
  width: 100%;
  min-width: 0;
  height: 20px;
  padding: 0 5px;
  border: 1px solid #bdbdbd;
  border-right: 0;
  background: #fff;
  font-size: 13px;

  &::placeholder {
    color: #bbb;
  }
`
const SideBox = styled.div`
  display: flex;
  flex: 1;
  flex-direction: column;
  border: 1px solid #c8c8c8;
  background: #fff;
`
const Category = styled.div`
  display: flex;
  align-items: center;
  gap: 6px;
  height: 25px;
  padding-left: 7px;
  background: #ececec;
  color: #444;
  font-size: 13px;
`
const Tree = styled.div`
  flex: 1;
  font-family: "Noto Sans CJK KR", sans-serif;
  font-size: 12px;
  line-height: 18px;
`
const TreeRoot = styled.div`
  display: flex;
  align-items: center;
  gap: 10px;
  height: 18px;
  padding-left: 8px;
  font-size: 13px;

  &::before {
    content: "";
    width: 5px;
    height: 5px;
    border-left: 1px solid #555;
    border-bottom: 1px solid #555;
  }
`
const TreeItem = styled.label`
  display: flex;
  align-items: center;
  gap: 3px;
  height: 18px;
  padding-left: 24px;
`
const Radio = styled.input`
  appearance: none;
  width: 13px;
  height: 13px;
  margin: 0;
  border: 1px solid #bcbcbc;
  border-radius: 50%;
  background: #fff;

  &:checked {
    border-color: #444;
    background: #444;
    box-shadow: inset 0 0 0 2px #fff;
  }
`
const TreeText = styled.span`
  height: 18px;
  padding: 0 2px;
  background: ${p => (p.$active ? "#0078d7" : "none")};
  color: ${p => (p.$active ? "#fff" : "#111")};
`
const SideFooter = styled.div`
  display: flex;
  align-items: center;
  gap: 2px;
  height: 29px;
  padding: 0 4px 0 9px;
  border-top: 1px solid #c8c8c8;
  background: #dddcd6;
`
const FooterText = styled.span`
  flex: 1;
  font-size: 13px;
  color: #444;
`

const ChartPanel = styled.main`
  flex: 1;
  min-width: 0;
  border: 1px solid #bdbdbd;
  background: #fff;
`
const QuoteRow = styled.div`
  display: flex;
  height: 21px;
  border-bottom: 1px solid #bdbdbd;
  line-height: 20px;
`
const GreenCells = styled.div`
  display: flex;
  background: #d3e8d0;
`
const QuoteCell = styled.span`
  width: ${p => p.$w}px;
  color: ${p => (p.$blue ? "#0000c0" : "#222")};
  font-size: ${p => (p.$bold ? 13 : 12)}px;
  font-weight: ${p => (p.$bold ? 700 : 400)};
  text-align: center;
`
const QuoteLabel = styled.span`
  width: ${p => p.$w}px;
  background: #ececec;
  font-size: 13px;
  text-align: center;
`
const QuoteTools = styled.div`
  display: flex;
  align-items: center;
  gap: 2px;
  margin-left: auto;
  padding-right: 1px;
`
const PeriodText = styled.span`
  margin-right: 2px;
  font-size: 13px;
`
const OrderButton = styled.button`
  width: 30px;
  height: 18px;
  padding: 0;
  border: 1px solid ${p => p.$color};
  background: #f7f7f7;
  color: ${p => p.$color};
  font-size: 13px;
  line-height: 16px;
`
const StackedButtons = styled.div`
  display: flex;
  flex-direction: column;
`
const StackButton = styled.button`
  width: 9px;
  height: 9px;
  padding: 0;
  border: 1px solid #bdbdbd;
  background: #fff;
`

const PaneBox = styled.section`
  position: relative;
  border-bottom: 1px solid #808080;

  & + & + & {
    border-bottom-color: #bdbdbd;
  }
`
const Plot = styled.svg`
  display: block;
  width: 100%;
  height: auto;
  font-size: 12px;

  line, rect, polyline {
    shape-rendering: crispEdges;
  }
`
const LegendRow = styled.div`
  position: absolute;
  top: 1px;
  left: 6px;
  display: flex;
  gap: 6px;
`
const LegendItem = styled.span`
  display: flex;
  align-items: center;
  color: ${p => p.$color};
  font-weight: ${p => (p.$bold ? 700 : 400)};
  white-space: pre;

  &::before {
    content: "";
    width: 3px;
    height: 7px;
    margin-right: 3px;
    background: currentColor;
  }
`
const Ko = styled.span`
  font-size: 13px;
`
const PaneTools = styled.div`
  position: absolute;
  top: 0;
  right: 0;
  display: flex;
  justify-content: space-between;
  width: 65px;
`
const PaneMarks = styled.div`
  display: flex;
  padding-right: 1px;
`
const MiniButton = styled.button`
  display: flex;
  align-items: center;
  justify-content: center;
  width: 10px;
  height: 10px;
  margin-right: -1px;
  padding: 0;
  border: 1px solid #111;
  background: #fff;
  color: #111;
  font-size: 8px;
  line-height: 8px;
`

const ScrollRow = styled.div`
  display: flex;
  align-items: center;
  height: 15px;
  border-top: 1px solid #bdbdbd;
  background: #fafafa;
`
const ScrollButton = styled.button`
  display: flex;
  align-items: center;
  justify-content: center;
  width: 17px;
  height: 14px;
  padding: 0;
  border: 1px solid;
  border-color: #fff #777 #777 #fff;
  background: #efefef;
`
const Track = styled.div`
  display: flex;
  flex: 1;
  justify-content: flex-end;
  height: 14px;
  background: #f6f6f6;
`
const Thumb = styled.div`
  width: 50px;
  border: 1px solid;
  border-color: #fff #777 #777 #fff;
  background: #efefef;
`
const FlatButtons = styled.div`
  display: flex;
`
const FlatButton = styled.button`
  display: flex;
  align-items: center;
  justify-content: center;
  width: 16px;
  height: 14px;
  padding: 0;
  border: 0;
  background: ${p => (p.$on ? "#e6e6e6" : "none")};
  color: #333;
`
const SpeedBox = styled.div`
  display: flex;
  flex-direction: column;
  width: 62px;
  margin: 0 4px 0 6px;
`
const Speed = styled.input`
  appearance: none;
  width: 100%;
  height: 8px;
  margin: 0;
  background: linear-gradient(#777, #777) 0 1px / 100% 1px no-repeat;

  &::-webkit-slider-thumb {
    appearance: none;
    width: 5px;
    height: 8px;
    border: 1px solid #111;
    border-radius: 0 0 3px 3px;
    background: #fff;
  }
`
const Ruler = styled.div`
  height: 4px;
  background: repeating-linear-gradient(90deg, #222 0 1px, transparent 1px 4px);
  border-bottom: 1px solid #222;
`

const ToolStrip = styled.nav`
  display: flex;
  flex: none;
  flex-direction: column;
  align-self: flex-start;
  align-items: center;
  width: 27px;
  margin-left: 7px;
  border: 1px solid #c8c8c8;
  background: #fafafa;
`
const StripGroup = styled.div`
  display: flex;
  flex-direction: column;
  align-items: center;
  width: 100%;
  border-bottom: 1px solid #c8c8c8;
`
const StripButton = styled.button`
  display: flex;
  align-items: center;
  justify-content: center;
  width: 22px;
  height: 22px;
  padding: 0;
  border: 1px solid ${p => (p.$on ? "#bbb" : "transparent")};
  border-radius: 3px;
  background: ${p => (p.$on ? "#efefef" : "none")};
  color: #333;
`
